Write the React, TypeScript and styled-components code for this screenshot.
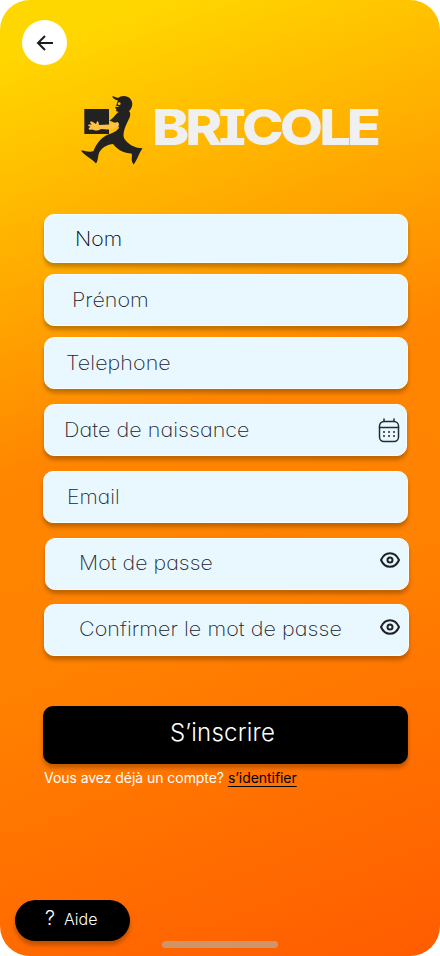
import React from "react";
import styled, { createGlobalStyle } from "styled-components";

const GlobalStyle = createGlobalStyle`
  *, *::before, *::after { box-sizing: border-box; }
  body { margin: 0; background: #fff; }
`;

const Screen = styled.main`
  display: flex;
  flex-direction: column;
  width: 440px;
  height: 956px;
  overflow: hidden;
  border-radius: 30px;
  background: linear-gradient(160deg, #ffd700 5%, #ff8600 43%, #ff8200 62%, #ff5c00 100%);
  font-family: Inter, sans-serif;
`;

const BackButton = styled.button`
  display: grid;
  place-items: center;
  flex: none;
  width: 45px;
  height: 45px;
  margin: 20px 0 0 22px;
  padding: 0;
  border: 0;
  border-radius: 50%;
  background: #fff;
`;

const Brand = styled.header`
  display: flex;
  height: 74px;
  margin: 28px 0 0 79px;
`;

const BrandName = styled.h1`
  margin: 4px 0 0 4.5px;
  color: #f0f0f0;
  font-size: 50px;
  line-height: 60px;
  font-weight: 770;
  letter-spacing: -3.5px;
  font-feature-settings: "cv08";
  white-space: nowrap;
  transform: scaleX(1.12);
  transform-origin: left;
`;

const Form = styled.form`
  display: flex;
  flex-direction: column;
`;

const Field = styled.label<{ $top: number; $left: number; $width: number; $height?: number }>`
  display: flex;
  align-items: center;
  justify-content: space-between;
  flex: none;
  width: ${(p) => p.$width}px;
  height: ${(p) => p.$height ?? 52}px;
  margin: ${(p) => p.$top}px 0 0 ${(p) => p.$left}px;
  padding-right: 8px;
  border: 1px solid #f8fdff;
  border-radius: 10px;
  background: #e9f8ff;
  box-shadow: 0 4px 4px rgba(0, 0, 0, 0.25);
`;

const FieldText = styled.span<{ $indent: number; $stretch?: number; $dark?: boolean; $lift?: number }>`
  margin-left: ${(p) => p.$indent}px;
  padding-bottom: ${(p) => p.$lift ?? 0}px;
  color: ${(p) => (p.$dark ? "#000" : "#20242f")};
  font-size: 20px;
  line-height: 30px;
  font-weight: ${(p) => (p.$dark ? 200 : 150)};
  letter-spacing: 0.05px;
  font-feature-settings: "cv11";
  white-space: nowrap;
  transform: scaleX(${(p) => p.$stretch ?? 1.075});
  transform-origin: left;
`;

const Submit = styled.button`
  flex: none;
  width: 365px;
  height: 58px;
  margin: 50px 0 0 43px;
  padding: 0 6px 4px 0;
  border: 0;
  border-radius: 10px;
  background: #000;
  box-shadow: 0 4px 4px rgba(0, 0, 0, 0.25);
  color: #fff;
  font: 280 24px/36px Inter, sans-serif;
  letter-spacing: 0.2px;
`;

const LoginLine = styled.p`
  margin: 5px 0 0 44px;
  color: #fff;
  font-size: 14px;
  line-height: 18px;
  letter-spacing: -0.05px;
  white-space: nowrap;
`;

const LoginLink = styled.a`
  color: #000;
  text-decoration: underline;
  text-underline-offset: 3px;
  text-decoration-skip-ink: none;
`;

const Footer = styled.footer`
  display: flex;
  height: 56px;
  margin-top: auto;
`;

const HelpButton = styled.button`
  display: flex;
  gap: 9px;
  width: 115px;
  height: 41px;
  margin-left: 15px;
  padding: 8px 0 0 30px;
  border: 0;
  border-radius: 21px;
  background: #000;
  box-shadow: 0 4px 4px rgba(0, 0, 0, 0.25);
  color: #fff;
  font: 300 16px/22px Inter, sans-serif;
`;

const HelpMark = styled.span`
  font-size: 20px;
  line-height: 20px;
  font-weight: 280;
`;

const HomeBar = styled.div`
  width: 116px;
  height: 7px;
  margin: 41px 0 0 32px;
  border-radius: 4px;
  background: #d19468;
`;

function Courier() {
  return (
    <svg width="68" height="74" viewBox="0 0 68 74" fill="#222">
      <path d="M5.300 16H30V41H5.300Z" />
      <path d="M33.300 3L39 5C42 2.500 48 2 51.500 6C55 10 53 17 48.500 19L41 19.500L37 18L37.500 16L36 15L37.500 12L38.500 8L34 5Z" />
      <path d="M41 18C37 20 35 25 30.500 27.500L38.500 31L40 35C37 39 33 40 28 42C22 45 17 51 14.500 58C10 60 6 57 2 57.500C5 62 12 65 17 70.500C20 67 18 61 22 57C25 53 30 51.500 34 51C39 57 45 60.500 52.500 60.500C54 64 51 66 54.500 71.500C58 68 60 60 63.500 55.300C55 55 49 51 45.500 46C43 42 46 34 48 30C50 26 53 21 50 18Z" />
      <path d="M38.500 29L30 31.500L20 32C20 30 19 27.500 18 28.500L17 31L13 28.500C10 28 11 30 13 31.500L10 31.500C8 32.500 10 33.500 11.500 33.500L9.500 35.500C10 37.500 12 36.500 13.500 36.500C16 38.500 19 37.500 22 36C29 37 35 36.500 38.500 34C41 32 40 30 38.500 29Z" fill="#ffc145" />
      <circle cx="40.200" cy="10.700" r="1.400" fill="#ffc400" />
      <path d="M35 7L39 8M36.500 13.500L39.500 13.500" stroke="#ffc400" strokeWidth="0.900" fill="none" />
    </svg>
  );
}

function CalendarIcon() {
  return (
    <svg width="22" height="25" viewBox="0 0 22 25" fill="none" stroke="#252a33" strokeWidth="1.500" strokeLinecap="round">
      <rect x="1.500" y="3.500" width="19" height="20" rx="4.500" />
      <path d="M1.500 9.500H20.500M6 1V3.500M16 1V3.500" />
      <path d="M6 14H6.010M11 14H11.010M16 14H16.010M6 18H6.010M11 18H11.010M16 18H16.010" strokeWidth="2" />
    </svg>
  );
}

function EyeIcon() {
  return (
    <svg width="20" height="16" viewBox="0 0 20 16" fill="none" stroke="#202124" strokeWidth="2">
      <path d="M1 8C3 3.500 6 1.200 10 1.200S17 3.500 19 8C17 12.500 14 14.800 10 14.800S3 12.500 1 8Z" strokeLinejoin="round" />
      <circle cx="10" cy="8" r="2.500" />
    </svg>
  );
}

const IconSlot = styled.span<{ $lift?: number; $outset?: number }>`
  display: flex;
  margin-right: ${(p) => -(p.$outset ?? 0)}px;
  padding-bottom: ${(p) => p.$lift ?? 0}px;
`;

export default function App() {
  return (
    <>
      <GlobalStyle />
      <Screen>
        <BackButton type="button" aria-label="Retour">
          <svg width="18" height="16" viewBox="0 0 18 16" fill="none" stroke="#1d1b20" strokeWidth="2">
            <path d="M17 8H2M9 1L2 8L9 15" />
          </svg>
        </BackButton>
        <Brand>
          <Courier />
          <BrandName>BRICOLE</BrandName>
        </Brand>
        <Form>
          <Field $top={47} $left={44} $width={364} $height={49}>
            <FieldText $indent={29.5} $stretch={1.06} $dark>Nom</FieldText>
          </Field>
          <Field $top={11} $left={44} $width={364}>
            <FieldText $indent={26.5}>Prénom</FieldText>
          </Field>
          <Field $top={11} $left={44} $width={364}>
            <FieldText $indent={21}>Telephone</FieldText>
          </Field>
          <Field $top={15} $left={44} $width={363}>
            <FieldText $indent={18.5}>Date de naissance</FieldText>
            <IconSlot $outset={2}><CalendarIcon /></IconSlot>
          </Field>
          <Field $top={15} $left={43} $width={365}>
            <FieldText $indent={22.5} $stretch={1.05}>Email</FieldText>
          </Field>
          <Field $top={15} $left={45} $width={364}>
            <FieldText $indent={32.5} $stretch={1.065} $lift={2}>Mot de passe</FieldText>
            <IconSlot $lift={8}><EyeIcon /></IconSlot>
          </Field>
          <Field $top={14} $left={44} $width={365}>
            <FieldText $indent={33.5} $lift={2}>Confirmer le mot de passe</FieldText>
            <IconSlot $lift={6}><EyeIcon /></IconSlot>
          </Field>
          <Submit type="button">S’inscrire</Submit>
        </Form>
        <LoginLine>
          Vous avez déjà un compte? <LoginLink>s’identifier</LoginLink>
        </LoginLine>
        <Footer>
          <HelpButton type="button">
            <HelpMark>?</HelpMark>
            <span>Aide</span>
          </HelpButton>
          <HomeBar />
        </Footer>
      </Screen>
    </>
  );
}
